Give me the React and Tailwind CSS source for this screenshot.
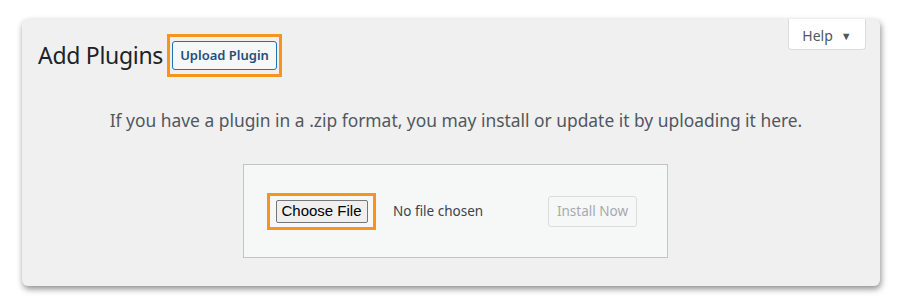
import React from 'react';

const HelpTab = () => (
    <button
        type="button"
        className="absolute top-0 right-[14px] flex h-[31px] w-[78px] items-center justify-center gap-[8px] rounded-b-[4px] border border-t-0 border-[#dcdcde] bg-white pt-[2px] text-[14px] text-[#50575e]"
    >
        <span>Help</span>
        <span className="text-[11px] leading-none text-[#50575e]">▼</span>
    </button>
);

export default function App() {
    return (
        <div className="h-[305px] w-[900px] bg-white pt-[19px] pl-[22px]" style={{ fontFamily: '"Noto Sans", "Open Sans", sans-serif' }}>
            <div className="relative h-[267px] w-[858px] rounded-[6px] bg-[#f0f0f1] shadow-[1px_3px_6px_rgba(0,0,0,0.45)]">
                <HelpTab />

                <div className="flex items-center pt-[15px] pl-[16px]">
                    <h1 className="text-[23px] font-normal leading-[29px] tracking-[-0.3px] text-[#1d2327]">Add Plugins</h1>
                    <div className="ml-[4px] flex h-[43px] w-[115px] items-center justify-center border-[3px] border-[#f7941d]">
                        <span className="flex h-[29px] w-[105px] items-center justify-center rounded-[3px] border border-[#2271b1] bg-[#f6f7f7] text-[13px] font-semibold text-[#1f4f7a]">
                            Upload Plugin
                        </span>
                    </div>
                </div>

                <p className="mt-[31px] pl-[10px] text-center text-[17.4px] leading-[24px] text-[#50575e]">
                    If you have a plugin in a .zip format, you may install or update it by uploading it here.
                </p>

                <div className="mt-[32px] ml-[221px] flex h-[94px] w-[425px] items-center border border-[#c3c4c7] bg-[#f6f7f7] pl-[23px] pr-[30px]">
                    <div className="flex h-[37px] w-[109px] items-center justify-center border-[3px] border-[#f7941d]">
                        <span
                            className="flex h-[23px] w-[92px] items-center justify-center rounded-[2px] border border-[#767676] bg-[#efefef] text-[15px] text-black"
                            style={{ fontFamily: '"Liberation Sans", Arial, sans-serif' }}
                        >
                            Choose File
                        </span>
                    </div>
                    <span className="ml-[17px] text-[13.5px] text-[#3c434a]">No file chosen</span>
                    <span className="ml-auto flex h-[31px] w-[89px] items-center justify-center rounded-[3px] border border-[#dcdcde] bg-[#f6f7f7] text-[13.5px] text-[#a7aaad]">
                        Install Now
                    </span>
                </div>
            </div>
        </div>
    );
}
